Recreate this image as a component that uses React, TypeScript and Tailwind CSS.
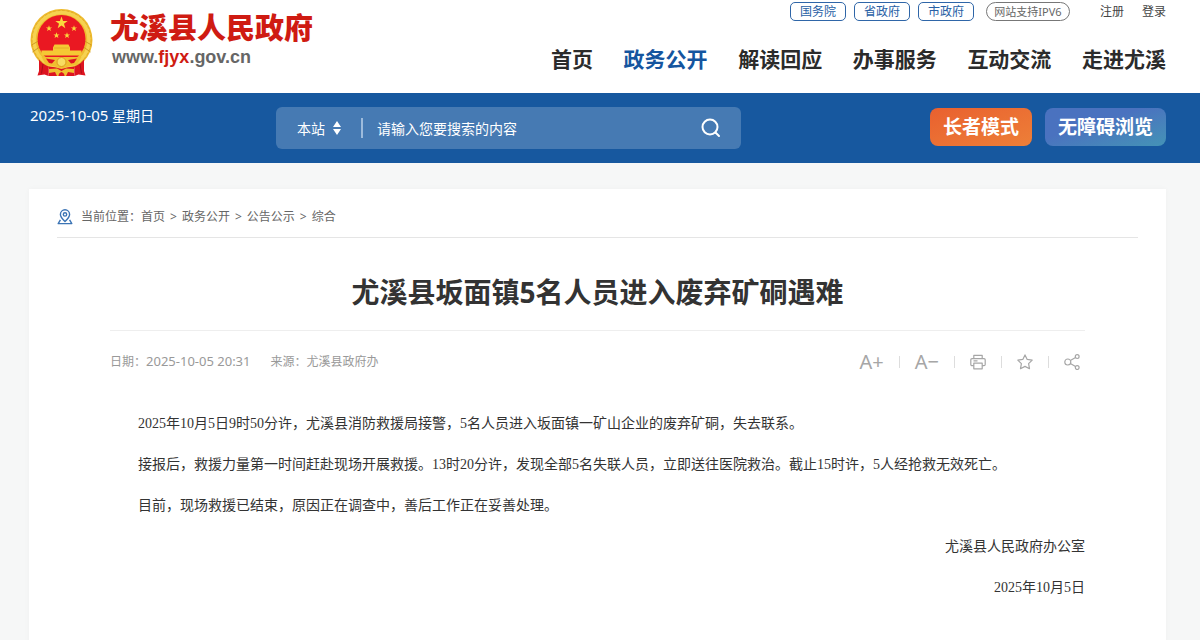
import { FormEvent, useState } from "react";

type LinkItem = {
  label: string;
  active?: boolean;
};

const NAV: LinkItem[] = [
  { label: "首页" },
  { label: "政务公开", active: true },
  { label: "解读回应" },
  { label: "办事服务" },
  { label: "互动交流" },
  { label: "走进尤溪" },
];

const GOV_LINKS = ["国务院", "省政府", "市政府"];

const CRUMBS = ["首页", "政务公开", "公告公示", "综合"];

const PARAGRAPHS = [
  "2025年10月5日9时50分许，尤溪县消防救援局接警，5名人员进入坂面镇一矿山企业的废弃矿硐，失去联系。",
  "接报后，救援力量第一时间赶赴现场开展救援。13时20分许，发现全部5名失联人员，立即送往医院救治。截止15时许，5人经抢救无效死亡。",
  "目前，现场救援已结束，原因正在调查中，善后工作正在妥善处理。",
];

const STAR = "M0-10 2.4-3.2H9.5L3.8 1 5.9 8 0 3.8-5.9 8-3.8 1-9.5-3.2H-2.4Z";

function Emblem() {
  return (
    <svg viewBox="0 0 126 138" className="h-[69px] w-[63px] shrink-0" aria-hidden="true">
      <circle cx="63" cy="64" r="62" fill="#eebb2e" />
      <circle cx="63" cy="64" r="55" fill="none" stroke="#f6d250" strokeWidth="7" />
      <circle cx="63" cy="64" r="59" fill="none" stroke="#dda628" strokeWidth="1.5" strokeDasharray="5 4" />
      <path d="M3 74 17 66M5 88 19 78M123 74 109 66M121 88 107 78" stroke="#d09a24" strokeWidth="2" />
      <circle cx="63" cy="62" r="48" fill="#ea1822" />
      <path d={STAR} fill="#fbd83d" transform="translate(63 30) scale(1.3)" />
      <path d={STAR} fill="#fbd83d" transform="translate(38 41) scale(.65)" />
      <path d={STAR} fill="#fbd83d" transform="translate(88 41) scale(.65)" />
      <path d={STAR} fill="#fbd83d" transform="translate(53 55) scale(.65)" />
      <path d={STAR} fill="#fbd83d" transform="translate(74 55) scale(.65)" />
      <path d="M49 73H77L80 79V85H103V95H23V85H46V79Z" fill="#f5c834" />
      <path d="M48 80H78" stroke="#dea624" strokeWidth="1.5" />
      <path d="M23 98H103L94 114 76 117 63 122 50 117 32 114Z" fill="#f0bf30" />
      <path d="M32 101 50 104 44 111 38 110ZM94 101 76 104 82 111 88 110Z" fill="#dd1420" />
      <circle cx="63" cy="108" r="9" fill="#f8dc62" stroke="#dd9c20" strokeWidth="2" />
      <path d="M18 103Q26 113 37 117V136L29 133 15 135 18 126ZM108 103Q100 113 89 117V136L97 133 111 135 108 126Z" fill="#dd1420" />
      <path d="M37 117Q50 117 63 122 76 117 89 117V136H37Z" fill="#dd1420" />
      <path d="M38 122 54 121 63 126 72 121 88 122V130L76 128 72 136H54L50 128 38 130Z" fill="#f0bf30" />
      <path d="M63 128Q57 130 57 136H69Q69 130 63 128Z" fill="#dd1420" />
      <path d="M26 112 23 131M100 112 103 131" stroke="#a90f18" strokeWidth="2" />
    </svg>
  );
}

function PinIcon() {
  return (
    <svg viewBox="0 0 16 16" className="size-4 shrink-0" fill="none" stroke="#3b74b5" strokeWidth="1.4" strokeLinejoin="round" aria-hidden="true">
      <path d="M8 12.5C5 9.6 3.4 7.7 3.4 5.4a4.6 4.6 0 0 1 9.2 0C12.600 7.7 11 9.6 8 12.5Z" />
      <circle cx="8" cy="5.4" r="1.7" />
      <path d="M3.4 10.8 1.2 14.6H14.8L12.6 10.8" />
    </svg>
  );
}

function PrintIcon() {
  return (
    <svg viewBox="0 0 16 16" className="size-4" fill="none" stroke="currentColor" strokeWidth="1.2" strokeLinejoin="round" aria-hidden="true">
      <path d="M3.8 4.6V1.4H12.2V4.6" />
      <path d="M3.8 11.6H2A1.2 1.2 0 0 1 .8 10.4V5.8A1.2 1.2 0 0 1 2 4.6H14A1.2 1.2 0 0 1 15.2 5.8V10.4A1.2 1.2 0 0 1 14 11.6H12.2" />
      <path d="M3.8 9.2H12.2V14.8H3.8ZM3.5 6.9H7.5" />
    </svg>
  );
}

function StarIcon() {
  return (
    <svg viewBox="0 0 16 16" className="size-4" fill="none" stroke="currentColor" strokeWidth="1.2" strokeLinejoin="round" aria-hidden="true">
      <path d="M8 .9 10.2 5.4 15.2 6.1 11.6 9.6 12.5 14.7 8 12.4 3.5 14.7 4.4 9.6 .8 6.1 5.8 5.4Z" />
    </svg>
  );
}

function ShareIcon() {
  return (
    <svg viewBox="0 0 16 16" className="size-4" fill="none" stroke="currentColor" strokeWidth="1.2" aria-hidden="true">
      <circle cx="3.8" cy="8" r="3" />
      <circle cx="13.2" cy="2.6" r="1.9" />
      <circle cx="13.2" cy="13.6" r="1.9" />
      <path d="M6.4 6.5 11.5 3.6M6.4 9.6 11.5 12.6" />
    </svg>
  );
}

function Separator() {
  return <span className="h-3 w-px bg-[#dddddd]" />;
}

function Header() {
  return (
    <header className="flex h-[93px] items-start justify-between bg-white pr-[34px] pl-[30px]">
      <a href="#" className="flex items-start gap-[17px] pt-2">
        <Emblem />
        <span className="flex flex-col">
          <span className="text-[29px] leading-[40px] font-black text-[#cf1b12]">尤溪县人民政府</span>
          <span className="pl-[2px] font-['Liberation_Sans'] text-[18px] leading-[18px] font-bold text-[#666666]">
            www.<span className="text-[#cf1b12]">fjyx</span>.gov.cn
          </span>
        </span>
      </a>

      <div className="flex flex-col items-end">
        <div className="flex items-center pt-[2px] text-[12px] leading-[17px]">
          <div className="flex gap-2">
            {GOV_LINKS.map((label) => (
              <a key={label} href="#" className="w-14 rounded-[5px] border border-[#2f66a8] text-center text-[#2860a5]">
                {label}
              </a>
            ))}
          </div>
          <a href="#" className="ml-3 w-[84px] rounded-full border border-[#777777] text-center text-[11px] text-[#666666]">
            网站支持IPV6
          </a>
          <a href="#" className="ml-[30px] text-[#444444]">注册</a>
          <a href="#" className="ml-[18px] text-[#444444]">登录</a>
        </div>
        <nav className="mt-[23px] flex w-[615px] justify-between text-[21px] leading-[30px] font-bold">
          {NAV.map((item) => (
            <a key={item.label} href="#" className={item.active ? "text-[#15559f]" : "text-[#2b2b2b]"}>
              {item.label}
            </a>
          ))}
        </nav>
      </div>
    </header>
  );
}

function SearchBar() {
  const [query, setQuery] = useState("");

  const handleSearch = (event: FormEvent) => {
    event.preventDefault();
  };

  return (
    <form
      onSubmit={handleSearch}
      className="mt-[14px] flex h-[42px] max-w-[465px] flex-1 items-center rounded-md bg-[#467ab3] pr-5 pl-[21px] text-[14px] text-white"
    >
      <select aria-label="搜索范围" className="w-7 appearance-none bg-transparent outline-none">
        <option>本站</option>
      </select>
      <svg viewBox="0 0 8 14" className="ml-2 h-[14px] w-2" fill="currentColor" aria-hidden="true">
        <path d="M4 0 8 6H0ZM4 14 0 8H8Z" />
      </svg>
      <span className="ml-5 h-5 w-[2px] bg-[#9dbbdc]" />
      <input
        type="text"
        aria-label="搜索"
        value={query}
        onChange={(e) => setQuery(e.target.value)}
        placeholder="请输入您要搜索的内容"
        className="ml-[14px] min-w-0 flex-1 bg-transparent outline-none placeholder:text-white"
      />
      <button type="submit" aria-label="搜索" className="shrink-0">
        <svg viewBox="0 0 20 20" className="size-5" fill="none" stroke="currentColor" strokeWidth="2" strokeLinecap="round" aria-hidden="true">
          <circle cx="9" cy="9" r="7.5" />
          <path d="M14.5 14.5 18 18" />
        </svg>
      </button>
    </form>
  );
}

function Toolbar() {
  return (
    <div className="flex h-[70px] items-start bg-[#17589f] pr-[34px] pl-[30px]">
      <p className="w-[246px] shrink-0 text-[14px] leading-[44px] text-white">
        <span className="text-[15px]">2025-10-05</span> 星期日
      </p>
      <SearchBar />
      <div className="mt-[15px] ml-auto flex gap-[13px] text-[19px] leading-[38px] font-bold text-white">
        <button type="button" className="rounded-lg bg-linear-to-br from-[#e9602f] to-[#ed7f38] px-[13px]">
          长者模式
        </button>
        <button type="button" className="rounded-lg bg-linear-to-br from-[#4a72bf] from-40% to-[#4493b6] px-[13px]">
          无障碍浏览
        </button>
      </div>
    </div>
  );
}

function Breadcrumb() {
  return (
    <nav className="flex h-[49px] items-center border-b border-[#e5e5e5] pt-[7px] text-[12px] text-[#666666]">
      <PinIcon />
      <span className="ml-2">当前位置：</span>
      {CRUMBS.map((label, i) => (
        <span key={label} className="flex items-center">
          {i > 0 && <span className="px-[5px]">&gt;</span>}
          <a href="#">{label}</a>
        </span>
      ))}
    </nav>
  );
}

export default function App() {
  return (
    <div className="min-h-screen bg-[#f6f7f7] font-['Noto_Sans','Noto_Sans_CJK_SC',sans-serif]">
      <Header />
      <Toolbar />

      <main className="mt-[26px] mr-[34px] ml-[29px] bg-white px-[28px] pb-16 shadow-[0_0_6px_rgba(0,0,0,0.03)]">
        <Breadcrumb />

        <article className="mx-[53px]">
          <h1 className="border-b border-[#eeeeee] pt-4 text-center text-[28px] leading-[76px] font-bold text-[#333333]">
            尤溪县坂面镇5名人员进入废弃矿硐遇难
          </h1>

          <div className="flex h-[62px] items-center justify-between text-[#999999]">
            <div className="flex items-center gap-5 text-[12px]">
              <span>
                日期：<time className="text-[13px]">2025-10-05 20:31</time>
              </span>
              <span>来源：尤溪县政府办</span>
            </div>
            <div className="flex items-center gap-[15px] pr-[5px] text-[20px] text-[#a6a6a6]">
              <button type="button" aria-label="放大字体">A+</button>
              <Separator />
              <button type="button" aria-label="缩小字体">A−</button>
              <Separator />
              <button type="button" aria-label="打印"><PrintIcon /></button>
              <Separator />
              <button type="button" aria-label="收藏"><StarIcon /></button>
              <Separator />
              <button type="button" aria-label="分享"><ShareIcon /></button>
            </div>
          </div>

          <div className="pt-[10px] font-['Liberation_Serif','Noto_Sans_CJK_SC',serif] text-[14px] leading-[41px] text-[#333333]">
            {PARAGRAPHS.map((text) => (
              <p key={text} className="indent-7">
                {text}
              </p>
            ))}
            <p className="text-right">尤溪县人民政府办公室</p>
            <p className="text-right">2025年10月5日</p>
          </div>
        </article>
      </main>
    </div>
  );
}
